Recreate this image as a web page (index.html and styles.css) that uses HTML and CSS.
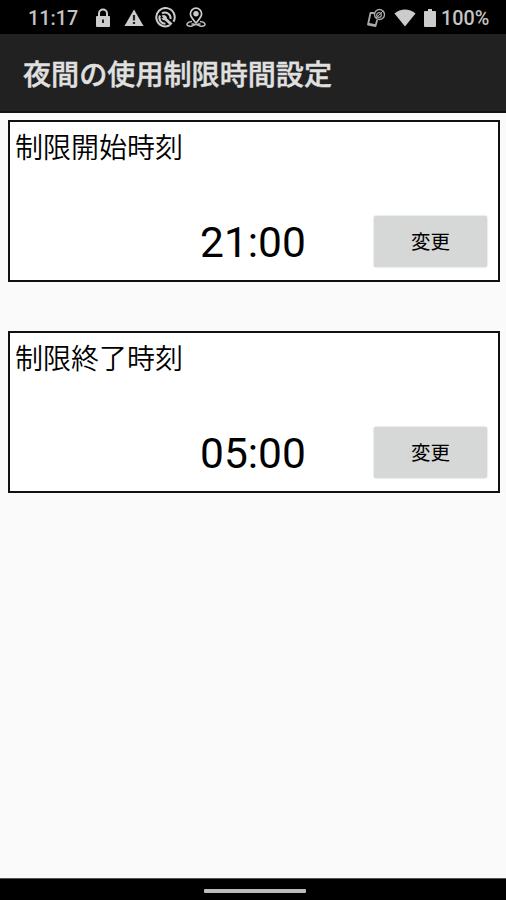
FILE: index.html
```html
<!DOCTYPE html>
<html lang="ja">
<head>
<meta charset="utf-8">
<title>夜間の使用制限時間設定</title>
<link rel="stylesheet" href="styles.css">
</head>
<body>
<div class="statusbar">
  <span class="clock">11:17</span>
  <svg class="icon lock" width="16" height="20" viewBox="0 0 16 20"><path d="M4 9V5.500a4 4 0 0 1 8 0V9" fill="none" stroke="#ccc" stroke-width="2"/><rect x="1" y="8" width="14" height="11" rx="1" fill="#ccc"/><path d="M8 11.500v3.500" stroke="#222" stroke-width="2"/></svg>
  <svg class="icon warning" width="20" height="18" viewBox="0 0 20 18"><path d="M10 .5 19.500 17H.5z" fill="#ccc"/><path d="M10 6v5.500M10 13v2" stroke="#222" stroke-width="2.200"/></svg>
  <svg class="icon dial" width="22" height="22" viewBox="0 0 22 22"><g fill="none" stroke="#ccc" stroke-width="2"><path d="M16 18.200a9.200 9.200 0 1 1 3.500-3.500"/><path d="M11.500 16.600A5.600 5.600 0 0 1 6 8.500M8 6.400A5.600 5.600 0 0 1 16.500 12"/></g><path d="M7.500 8.500 10.500 8l2 1.500.5 2 5.500 5-2 2-5.500-5-2-.5L7 11l2.500.3z" fill="#ccc"/></svg>
  <svg class="icon place" width="20" height="22" viewBox="0 0 20 22"><path d="M10 16C7 12.500 4.400 10 4.400 6.800a5.600 5.600 0 0 1 11.200 0C15.600 10 13 12.500 10 16z" fill="none" stroke="#ccc" stroke-width="1.700"/><circle cx="10" cy="6.800" r="2.700" fill="#ccc"/><path d="M6 14.500c-3 .4-5 1.700-5 3 0 1.500 3 2 5 1.500 2-.5 2-1.500 4-1.500s2 1 4 1.500 5 0 5-1.500c0-1.300-2-2.600-5-3M5.500 17h3M11.500 17h3" fill="none" stroke="#bbb" stroke-width="1.600"/></svg>
  <svg class="icon cast" width="20" height="20" viewBox="0 0 20 20"><g fill="none" stroke="#aaa"><path d="M8 5H4.500L2 16.500l7.500 1.500 1.700-6" stroke-width="1.800" stroke-linejoin="round"/><path d="M2 15.800 9.300 17.300" stroke-width="2"/><circle cx="13.500" cy="6.500" r="5" stroke-width="1.400"/><circle cx="13" cy="7" r="2.300" stroke-width="1.300"/><path d="m10 10 7-7" stroke-width="1"/></g></svg>
  <svg class="icon wifi" width="22" height="18" viewBox="0 0 22 18"><path d="M.5 4.500C6.500-.8 15.500-.8 21.500 4.500L11 17.500z" fill="#ccc"/></svg>
  <svg class="icon battery" width="12" height="18" viewBox="0 0 12 18"><path d="M4 0h4v2h3q1 0 1 1v14q0 1-1 1H1q-1 0-1-1V3q0-1 1-1h3z" fill="#ccc"/></svg>
  <span class="percent">100%</span>
</div>
<header class="appbar"><h1>夜間の使用制限時間設定</h1></header>
<main>
  <section class="card">
    <h2>制限開始時刻</h2>
    <div class="row"><span class="time">21:00</span><button type="button">変更</button></div>
  </section>
  <section class="card">
    <h2>制限終了時刻</h2>
    <div class="row"><span class="time">05:00</span><button type="button">変更</button></div>
  </section>
</main>
<footer class="navbar"><div class="handle"></div></footer>
</body>
</html>
```

FILE: styles.css
```css
* { box-sizing: border-box; }

body {
  margin: 0;
  height: 900px;
  display: flex;
  flex-direction: column;
  overflow: hidden;
  background: #fafafa;
  color: #000;
  font-family: Roboto, "Noto Sans CJK JP", sans-serif;
}

.statusbar {
  display: flex;
  align-items: center;
  flex: none;
  height: 34px;
  padding: 2px 17px 0 28px;
  background: #000;
  color: #c4c4c4;
  font-size: 19.8px;
  font-weight: 500;
  line-height: 32px;
}

.clock { width: 67px; padding-top: 1px; }
.icon { flex: none; }
.warning { margin-left: 13px; }
.dial { margin-left: 10px; }
.place { margin-left: 10px; }
.cast { margin-left: auto; }
.wifi { margin-left: 8px; }
.battery { margin-left: 8px; }
.percent { margin-left: 5px; padding-top: 1px; width: 48px; white-space: nowrap; }

.appbar {
  display: flex;
  align-items: center;
  flex: none;
  height: 79px;
  padding: 6px 23px 0;
  background: #212121;
  border-bottom: 2px solid #111;
}

h1 {
  margin: 0;
  color: #e0e0e0;
  font-size: 28.1px;
  font-weight: 500;
  line-height: 40px;
  white-space: nowrap;
  -webkit-text-stroke: .4px #e0e0e0;
}

main {
  display: flex;
  flex-direction: column;
  flex: 1;
  gap: 49px;
  padding: 7px 6px 0 8px;
}

.card {
  display: flex;
  flex-direction: column;
  justify-content: space-between;
  height: 162px;
  padding: 7px 11px 12px 5px;
  border: 2px solid #111;
  background: #fff;
}

h2 {
  margin: 0;
  font-size: 28px;
  font-weight: 350;
  line-height: 40px;
}

.row {
  display: grid;
  grid-template-columns: 1fr 102px 1fr;
  align-items: center;
}

.time {
  grid-column: 2;
  padding-top: 3px;
  font-size: 42.5px;
  line-height: 51px;
  white-space: nowrap;
}

button {
  justify-self: end;
  width: 113px;
  height: 51px;
  padding: 0;
  border: 0;
  border-radius: 2px;
  background: #d6d7d7;
  box-shadow: 0 0 2px rgba(0, 0, 0, .25);
  color: #000;
  font: 400 19.5px/53px Roboto, "Noto Sans CJK JP", sans-serif;
}

.navbar {
  display: flex;
  justify-content: center;
  flex: none;
  height: 22px;
  padding-top: 10px;
  border-top: 1px solid #555;
  background: #000;
}

.handle {
  width: 102px;
  height: 4px;
  margin-left: 4px;
  border-radius: 1px;
  background: #bcbcbc;
}
```
